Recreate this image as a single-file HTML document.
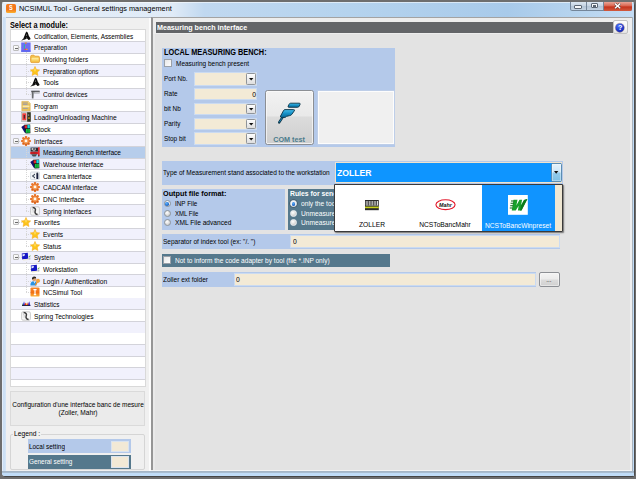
<!DOCTYPE html><html><head><meta charset="utf-8"><title>NCSIMUL Tool - General settings management</title><style>
html,body{margin:0;padding:0;}
body{width:636px;height:479px;position:relative;overflow:hidden;background:#4c4c4c;font-family:"Liberation Sans",sans-serif;}
.b{position:absolute;box-sizing:border-box;}
.t{position:absolute;white-space:nowrap;line-height:10px;height:10px;transform-origin:0 50%;}
svg{position:absolute;overflow:visible;}
</style></head><body>
<div class="b" style="left:0px;top:0px;width:636px;height:479px;background:#6e6e6e;"></div>
<div class="b" style="left:2px;top:2px;width:632px;height:473.5px;background:linear-gradient(90deg,#e4eef9 0%,#e0ebf7 27%,#c0d8f0 32%,#b5d3ee 55%,#a8caea 80%,#b8d5ef 92%,#c4dcf4 100%);border-radius:2px 2px 3px 3px;box-shadow:0.8px 0.9px 0 0 #454545;"></div>
<div class="b" style="left:2px;top:2px;width:632px;height:1px;background:rgba(255,255,255,0.55);border-radius:2px 2px 0 0;"></div>
<div class="b" style="left:2px;top:17px;width:4px;height:455px;background:linear-gradient(90deg,#eef4fb,#c9def4 40%,#d6e6f6);"></div>
<div class="b" style="left:631.5px;top:17px;width:2.5px;height:458.5px;background:linear-gradient(90deg,#a9b3bd 0,#a9b3bd 35%,#c0dcf7 40%,#c0dcf7);"></div>
<div class="b" style="left:2px;top:471px;width:632px;height:4.5px;background:linear-gradient(180deg,#a2b2c2 0,#a9bdd0 30%,#c0dcf7 38%,#c0dcf7 100%);border-radius:0 0 3px 3px;"></div>
<div class="b" style="left:6.2px;top:3.6px;width:9.5px;height:9.4px;background:linear-gradient(180deg,#f57c1e 0%,#f3731a 60%,#fbb22e 100%);border-radius:1.6px;"></div>
<div class="t" style="left:8.9px;top:3.20px;font-size:7.4px;color:#fff;transform:scaleX(0.75);font-weight:bold;">S</div>
<div class="t" style="left:19px;top:4.30px;font-size:7.8px;color:#000;transform:scaleX(0.94);">NCSIMUL Tool - General settings management</div>
<div class="b" style="left:569.7px;top:2px;width:62.3px;height:9.4px;background:linear-gradient(180deg,#dbe6f1 0%,#c6d4e3 45%,#b3c4d6 55%,#c3d3e3 100%);border:0.8px solid #74869a;border-top:none;border-radius:0 0 2.5px 2.5px;"></div>
<div class="b" style="left:586px;top:2px;width:0.8px;height:9.4px;background:#74869a;"></div>
<div class="b" style="left:603px;top:2px;width:0.8px;height:9.4px;background:#74869a;"></div>
<div class="b" style="left:603.6px;top:2px;width:28px;height:8.8px;background:linear-gradient(180deg,#e8a597 0%,#dc6a55 40%,#c5341d 55%,#d25a3f 100%);border-radius:0 0 2px 0;"></div>
<div class="b" style="left:574.2px;top:5.4px;width:7.8px;height:3.4px;background:#f6f8fa;border:0.8px solid #5b6673;border-radius:1px;"></div>
<div class="b" style="left:591.2px;top:2.8px;width:6.8px;height:5.2px;background:#f6f8fa;border:0.8px solid #5b6673;border-radius:1px;"></div>
<div class="b" style="left:593.4px;top:4.6px;width:2.6px;height:1.8px;background:#b9c6d4;border:0.5px solid #5b6673;"></div>
<svg style="left:614.2px;top:2.6px" width="7.2" height="5.8" viewBox="0 0 7.2 5.8"><path d="M1 0.6 L6.2 5.2 M6.2 0.6 L1 5.2" stroke="#4a2a2a" stroke-width="2.4"/><path d="M1 0.6 L6.2 5.2 M6.2 0.6 L1 5.2" stroke="#fff" stroke-width="1.5"/></svg>
<div class="b" style="left:5.7px;top:17px;width:626px;height:454px;background:#f0f0f0;"></div>
<div class="b" style="left:5.7px;top:17px;width:626px;height:1px;background:#b4bcc6;"></div>
<div class="b" style="left:149px;top:18px;width:2px;height:453px;background:#fcfcfc;"></div>
<div class="b" style="left:151px;top:17px;width:480.7px;height:453.2px;background:#e3e3e3;border:1px solid #a3a3a3;border-left:2px solid #959595;border-bottom:none;"></div>
<div class="b" style="left:153px;top:18px;width:1.6px;height:452px;background:#e9e9e9;"></div>
<div class="b" style="left:153px;top:18px;width:477.5px;height:16.4px;background:#ededed;"></div>
<div class="b" style="left:630.4px;top:18px;width:1.2px;height:453px;background:#efefef;"></div>
<div class="b" style="left:153px;top:470px;width:478.5px;height:1px;background:#f4f4f4;"></div>
<div class="t" style="left:10px;top:20.70px;font-size:8.2px;color:#000;transform:scaleX(0.891);font-weight:bold;">Select a module:</div>
<div class="b" style="left:10px;top:29.4px;width:136px;height:358px;background:#fff;border:1px solid #d9d9d9;"></div>
<div class="b" style="left:11px;top:30.4px;width:134px;height:10.75px;background:#fff;"></div>
<div class="b" style="left:11px;top:41.16px;width:134px;height:0.9px;background:#d3d3da;"></div>
<div class="b" style="left:11px;top:42.05px;width:134px;height:10.75px;background:#f1f1fc;"></div>
<div class="b" style="left:11px;top:52.81px;width:134px;height:0.9px;background:#d3d3da;"></div>
<div class="b" style="left:11px;top:53.71px;width:134px;height:10.75px;background:#fff;"></div>
<div class="b" style="left:11px;top:64.46px;width:134px;height:0.9px;background:#d3d3da;"></div>
<div class="b" style="left:11px;top:65.36px;width:134px;height:10.75px;background:#f1f1fc;"></div>
<div class="b" style="left:11px;top:76.12px;width:134px;height:0.9px;background:#d3d3da;"></div>
<div class="b" style="left:11px;top:77.02px;width:134px;height:10.75px;background:#fff;"></div>
<div class="b" style="left:11px;top:87.77px;width:134px;height:0.9px;background:#d3d3da;"></div>
<div class="b" style="left:11px;top:88.67px;width:134px;height:10.75px;background:#f1f1fc;"></div>
<div class="b" style="left:11px;top:99.43px;width:134px;height:0.9px;background:#d3d3da;"></div>
<div class="b" style="left:11px;top:100.33px;width:134px;height:10.75px;background:#fff;"></div>
<div class="b" style="left:11px;top:111.08px;width:134px;height:0.9px;background:#d3d3da;"></div>
<div class="b" style="left:11px;top:111.98px;width:134px;height:10.75px;background:#f1f1fc;"></div>
<div class="b" style="left:11px;top:122.74px;width:134px;height:0.9px;background:#d3d3da;"></div>
<div class="b" style="left:11px;top:123.64px;width:134px;height:10.75px;background:#fff;"></div>
<div class="b" style="left:11px;top:134.39px;width:134px;height:0.9px;background:#d3d3da;"></div>
<div class="b" style="left:11px;top:135.29px;width:134px;height:10.75px;background:#f1f1fc;"></div>
<div class="b" style="left:11px;top:146.05px;width:134px;height:0.9px;background:#d3d3da;"></div>
<div class="b" style="left:11px;top:146.95px;width:134px;height:10.75px;background:#b6cdeb;"></div>
<div class="b" style="left:11px;top:157.7px;width:134px;height:0.9px;background:#d3d3da;"></div>
<div class="b" style="left:11px;top:158.6px;width:134px;height:10.75px;background:#f1f1fc;"></div>
<div class="b" style="left:11px;top:169.36px;width:134px;height:0.9px;background:#d3d3da;"></div>
<div class="b" style="left:11px;top:170.26px;width:134px;height:10.75px;background:#fff;"></div>
<div class="b" style="left:11px;top:181.01px;width:134px;height:0.9px;background:#d3d3da;"></div>
<div class="b" style="left:11px;top:181.91px;width:134px;height:10.75px;background:#f1f1fc;"></div>
<div class="b" style="left:11px;top:192.67px;width:134px;height:0.9px;background:#d3d3da;"></div>
<div class="b" style="left:11px;top:193.57px;width:134px;height:10.75px;background:#fff;"></div>
<div class="b" style="left:11px;top:204.32px;width:134px;height:0.9px;background:#d3d3da;"></div>
<div class="b" style="left:11px;top:205.22px;width:134px;height:10.75px;background:#f1f1fc;"></div>
<div class="b" style="left:11px;top:215.98px;width:134px;height:0.9px;background:#d3d3da;"></div>
<div class="b" style="left:11px;top:216.88px;width:134px;height:10.75px;background:#fff;"></div>
<div class="b" style="left:11px;top:227.63px;width:134px;height:0.9px;background:#d3d3da;"></div>
<div class="b" style="left:11px;top:228.53px;width:134px;height:10.75px;background:#f1f1fc;"></div>
<div class="b" style="left:11px;top:239.29px;width:134px;height:0.9px;background:#d3d3da;"></div>
<div class="b" style="left:11px;top:240.19px;width:134px;height:10.75px;background:#fff;"></div>
<div class="b" style="left:11px;top:250.94px;width:134px;height:0.9px;background:#d3d3da;"></div>
<div class="b" style="left:11px;top:251.84px;width:134px;height:10.75px;background:#f1f1fc;"></div>
<div class="b" style="left:11px;top:262.6px;width:134px;height:0.9px;background:#d3d3da;"></div>
<div class="b" style="left:11px;top:263.5px;width:134px;height:10.75px;background:#fff;"></div>
<div class="b" style="left:11px;top:274.25px;width:134px;height:0.9px;background:#d3d3da;"></div>
<div class="b" style="left:11px;top:275.15px;width:134px;height:10.75px;background:#f1f1fc;"></div>
<div class="b" style="left:11px;top:285.91px;width:134px;height:0.9px;background:#d3d3da;"></div>
<div class="b" style="left:11px;top:286.81px;width:134px;height:10.75px;background:#fff;"></div>
<div class="b" style="left:11px;top:297.56px;width:134px;height:0.9px;background:#d3d3da;"></div>
<div class="b" style="left:11px;top:298.46px;width:134px;height:10.75px;background:#f1f1fc;"></div>
<div class="b" style="left:11px;top:309.22px;width:134px;height:0.9px;background:#d3d3da;"></div>
<div class="b" style="left:11px;top:310.12px;width:134px;height:10.75px;background:#fff;"></div>
<div class="b" style="left:11px;top:320.87px;width:134px;height:0.9px;background:#d3d3da;"></div>
<div class="b" style="left:11px;top:321.77px;width:134px;height:10.75px;background:#f1f1fc;"></div>
<div class="b" style="left:11px;top:332.53px;width:134px;height:0.9px;background:#d3d3da;"></div>
<div class="b" style="left:11px;top:333.43px;width:134px;height:10.75px;background:#fff;"></div>
<div class="b" style="left:11px;top:344.18px;width:134px;height:0.9px;background:#d3d3da;"></div>
<div class="b" style="left:11px;top:345.08px;width:134px;height:10.75px;background:#f1f1fc;"></div>
<div class="b" style="left:11px;top:355.84px;width:134px;height:0.9px;background:#d3d3da;"></div>
<div class="b" style="left:11px;top:356.74px;width:134px;height:10.75px;background:#fff;"></div>
<div class="b" style="left:11px;top:367.49px;width:134px;height:0.9px;background:#d3d3da;"></div>
<div class="b" style="left:11px;top:368.39px;width:134px;height:10.75px;background:#f1f1fc;"></div>
<div class="b" style="left:11px;top:379.15px;width:134px;height:0.9px;background:#d3d3da;"></div>
<div class="b" style="left:11px;top:380.05px;width:134px;height:6.35px;background:#fff;"></div>
<div class="b" style="left:25.6px;top:51.98px;width:0.6px;height:42.12px;border-left:0.6px dotted #d6d6d6;"></div>
<div class="b" style="left:25.6px;top:59.14px;width:5.399999999999999px;height:0.6px;border-top:0.6px dotted #d6d6d6;"></div>
<div class="b" style="left:25.6px;top:70.79px;width:5.399999999999999px;height:0.6px;border-top:0.6px dotted #d6d6d6;"></div>
<div class="b" style="left:25.6px;top:82.45px;width:5.399999999999999px;height:0.6px;border-top:0.6px dotted #d6d6d6;"></div>
<div class="b" style="left:25.6px;top:94.1px;width:5.399999999999999px;height:0.6px;border-top:0.6px dotted #d6d6d6;"></div>
<div class="b" style="left:18.5px;top:47.48px;width:3.0px;height:0.6px;border-top:0.6px dotted #d6d6d6;"></div>
<div class="b" style="left:25.6px;top:145.22px;width:0.6px;height:65.43px;border-left:0.6px dotted #d6d6d6;"></div>
<div class="b" style="left:25.6px;top:152.38px;width:5.399999999999999px;height:0.6px;border-top:0.6px dotted #d6d6d6;"></div>
<div class="b" style="left:25.6px;top:164.03px;width:5.399999999999999px;height:0.6px;border-top:0.6px dotted #d6d6d6;"></div>
<div class="b" style="left:25.6px;top:175.69px;width:5.399999999999999px;height:0.6px;border-top:0.6px dotted #d6d6d6;"></div>
<div class="b" style="left:25.6px;top:187.34px;width:5.399999999999999px;height:0.6px;border-top:0.6px dotted #d6d6d6;"></div>
<div class="b" style="left:25.6px;top:199.0px;width:5.399999999999999px;height:0.6px;border-top:0.6px dotted #d6d6d6;"></div>
<div class="b" style="left:25.6px;top:210.65px;width:5.399999999999999px;height:0.6px;border-top:0.6px dotted #d6d6d6;"></div>
<div class="b" style="left:18.5px;top:140.72px;width:3.0px;height:0.6px;border-top:0.6px dotted #d6d6d6;"></div>
<div class="b" style="left:25.6px;top:226.81px;width:0.6px;height:18.81px;border-left:0.6px dotted #d6d6d6;"></div>
<div class="b" style="left:25.6px;top:233.96px;width:5.399999999999999px;height:0.6px;border-top:0.6px dotted #d6d6d6;"></div>
<div class="b" style="left:25.6px;top:245.62px;width:5.399999999999999px;height:0.6px;border-top:0.6px dotted #d6d6d6;"></div>
<div class="b" style="left:18.5px;top:222.31px;width:3.0px;height:0.6px;border-top:0.6px dotted #d6d6d6;"></div>
<div class="b" style="left:25.6px;top:261.77px;width:0.6px;height:30.46px;border-left:0.6px dotted #d6d6d6;"></div>
<div class="b" style="left:25.6px;top:268.93px;width:5.399999999999999px;height:0.6px;border-top:0.6px dotted #d6d6d6;"></div>
<div class="b" style="left:25.6px;top:280.58px;width:5.399999999999999px;height:0.6px;border-top:0.6px dotted #d6d6d6;"></div>
<div class="b" style="left:25.6px;top:292.24px;width:5.399999999999999px;height:0.6px;border-top:0.6px dotted #d6d6d6;"></div>
<div class="b" style="left:18.5px;top:257.27px;width:3.0px;height:0.6px;border-top:0.6px dotted #d6d6d6;"></div>
<svg style="left:20.80px;top:30.83px" width="10" height="10" viewBox="0 0 10 10"><path d="M5.7 0.5 L6.8 1.8 L7.8 4.8 L9.5 7.4 L9.2 8.6 L7.4 8.9 L6.4 7.8 L5.4 7.6 L4.2 8.6 L1.8 9 L0.5 9.9 L0.9 8.9 L2.4 7.4 L3.6 4.4 L4.6 1.7 Z" fill="#0c0c0c"/><path d="M5.3 2.8 L6 4.6 L5 5 Z" fill="#8f8f8f"/><path d="M5.2 6.6 L6 6.6" stroke="#777" stroke-width="0.6"/></svg>
<div class="t" style="left:33.6px;top:31.83px;font-size:8px;color:#000;transform:scaleX(0.797);">Codification, Elements, Assemblies</div>
<div class="b" style="left:13px;top:45px;width:6px;height:6px;background:linear-gradient(135deg,#fff,#ececec);border:1px solid #bdbdbd;border-radius:1px;"></div>
<div class="b" style="left:14.5px;top:47.5px;width:3px;height:1px;background:#6a6a6a;"></div>
<svg style="left:20.80px;top:42.48px" width="10" height="10" viewBox="0 0 10 10"><rect x="0.2" y="0.5" width="9.4" height="9.2" fill="#6e70f3"/><rect x="0.2" y="8.6" width="9.4" height="1.1" fill="#4d56ea"/><path d="M3.4 0.5 L6.2 0.5 L4.8 2.2Z" fill="#f0882a"/><path d="M3.6 2.6 L3.6 7.2" stroke="#1fc2a0" stroke-width="1.1"/><path d="M3.1 7.3 L5.2 7.3" stroke="#e4407a" stroke-width="1.2"/><path d="M5 7.3 L6.6 7.3" stroke="#f09a2a" stroke-width="1.2"/><path d="M4.6 3.6 L4.6 6" stroke="#b05ae6" stroke-width="0.8"/></svg>
<div class="t" style="left:33.6px;top:43.48px;font-size:8px;color:#000;transform:scaleX(0.8);">Preparation</div>
<svg style="left:30.40px;top:54.14px" width="10" height="10" viewBox="0 0 10 10"><defs><linearGradient id="fg" x1="0" y1="0" x2="0" y2="1"><stop offset="0" stop-color="#fff0a8"/><stop offset="1" stop-color="#f6c142"/></linearGradient></defs><path d="M0.6 2.6 Q0.6 1.2 2 1.2 L4 1.2 L5 2.2 L8.2 2.2 Q9.5 2.2 9.5 3.4 L9.5 7.4 Q9.5 8.6 8.2 8.6 L1.9 8.6 Q0.6 8.6 0.6 7.4 Z" fill="#f3c148" stroke="#e39a2c" stroke-width="0.8"/><rect x="1.6" y="3.8" width="7" height="3.8" rx="0.6" fill="url(#fg)"/></svg>
<div class="t" style="left:43.4px;top:55.14px;font-size:8px;color:#000;transform:scaleX(0.815);">Working folders</div>
<svg style="left:30.40px;top:65.79px" width="10" height="10" viewBox="0 0 10 10"><path d="M5 0.4 L6.4 3.5 L9.7 3.9 L7.3 6.2 L7.9 9.5 L5 7.9 L2.1 9.5 L2.7 6.2 L0.3 3.9 L3.6 3.5 Z" fill="#fcc41c" stroke="#f4a51a" stroke-width="0.5"/><path d="M5 1.6 L5.9 3.9 L5 6 L4.1 3.9Z" fill="#ffe066"/></svg>
<div class="t" style="left:43.4px;top:66.79px;font-size:8px;color:#000;transform:scaleX(0.8);">Preparation options</div>
<svg style="left:30.40px;top:77.45px" width="10" height="10" viewBox="0 0 10 10"><path d="M5.7 0.5 L6.8 1.8 L7.8 4.8 L9.5 7.4 L9.2 8.6 L7.4 8.9 L6.4 7.8 L5.4 7.6 L4.2 8.6 L1.8 9 L0.5 9.9 L0.9 8.9 L2.4 7.4 L3.6 4.4 L4.6 1.7 Z" fill="#0c0c0c"/><path d="M5.3 2.8 L6 4.6 L5 5 Z" fill="#8f8f8f"/><path d="M5.2 6.6 L6 6.6" stroke="#777" stroke-width="0.6"/></svg>
<div class="t" style="left:43.4px;top:78.45px;font-size:8px;color:#000;transform:scaleX(0.84);">Tools</div>
<svg style="left:30.40px;top:89.10px" width="10" height="10" viewBox="0 0 10 10"><path d="M0.8 1.8 L9.6 1.8 L9.6 4.4 L4 4.4 L3.6 9.4 L1.8 9.4 L1.6 4.4 L0.8 1 Z" fill="#9a9da1"/><rect x="1.4" y="1.8" width="8.2" height="1.1" fill="#4d4f52"/><path d="M2.6 3 L2.6 9.2" stroke="#5d5f63" stroke-width="0.9"/><path d="M4.6 3.4 L9.4 3.4" stroke="#cfd1d4" stroke-width="0.8"/></svg>
<div class="t" style="left:43.4px;top:90.10px;font-size:8px;color:#000;transform:scaleX(0.809);">Control devices</div>
<svg style="left:20.80px;top:100.76px" width="10" height="10" viewBox="0 0 10 10"><path d="M0.8 0.4 L7.4 0.4 L9.2 2.2 L9.2 9.8 L0.8 9.8 Z" fill="#e9c25a" stroke="#d2a13a" stroke-width="0.5"/><path d="M1.8 2 L6.6 2 M1.8 3.4 L6.6 3.4" stroke="#8f95b8" stroke-width="0.8"/><rect x="1.6" y="4.6" width="6.8" height="1.6" fill="#f7e7ae"/><path d="M1.8 7.4 L6.8 7.4" stroke="#8f95b8" stroke-width="0.8"/><path d="M7.4 0.4 L7.4 2.2 L9.2 2.2Z" fill="#f8e6a6"/></svg>
<div class="t" style="left:33.6px;top:101.76px;font-size:8px;color:#000;transform:scaleX(0.776);">Program</div>
<svg style="left:20.80px;top:112.41px" width="10" height="10" viewBox="0 0 10 10"><rect x="0.4" y="0.4" width="6" height="9.2" fill="#d9dedd" stroke="#9aa3a0" stroke-width="0.5"/><rect x="1.3" y="1.3" width="4" height="7" fill="#f0403c"/><rect x="2.7" y="3" width="1.2" height="3.6" fill="#3a2a2a"/><rect x="6.2" y="0.2" width="3.6" height="9.6" fill="#33331e"/><rect x="6.8" y="2.4" width="1.4" height="1.4" fill="#8b8f94"/><rect x="7" y="5.4" width="2" height="1.4" fill="#b8891e"/></svg>
<div class="t" style="left:33.6px;top:113.41px;font-size:8px;color:#000;transform:scaleX(0.833);">Loading/Unloading Machine</div>
<svg style="left:20.80px;top:124.07px" width="10" height="10" viewBox="0 0 10 10"><path d="M0.3 3 L3.6 0.8 L5 9 L3.6 8.4 Z" fill="#0f106e"/><path d="M3.2 0.7 L9.2 0.4 L9.4 9.2 L4.6 9.4 Z" fill="#111"/><rect x="3.7" y="1.3" width="2.4" height="3" fill="#e3262a"/><rect x="6.4" y="0.9" width="2.4" height="3.4" fill="#18d6e6"/><rect x="4.9" y="5" width="4" height="3.8" fill="#12c244"/><path d="M6.9 5 L6.9 8.8" stroke="#0a5a20" stroke-width="0.5"/></svg>
<div class="t" style="left:33.6px;top:125.07px;font-size:8px;color:#000;transform:scaleX(0.834);">Stock</div>
<div class="b" style="left:13px;top:138px;width:6px;height:6px;background:linear-gradient(135deg,#fff,#ececec);border:1px solid #bdbdbd;border-radius:1px;"></div>
<div class="b" style="left:14.5px;top:140.5px;width:3px;height:1px;background:#6a6a6a;"></div>
<svg style="left:20.80px;top:135.72px" width="10" height="10" viewBox="0 0 10 10"><g fill="#e9762b"><rect x="-1.05" y="-4.9" width="2.1" height="2.4" rx="0.4" transform="translate(5 5) rotate(0)"/><rect x="-1.05" y="-4.9" width="2.1" height="2.4" rx="0.4" transform="translate(5 5) rotate(45)"/><rect x="-1.05" y="-4.9" width="2.1" height="2.4" rx="0.4" transform="translate(5 5) rotate(90)"/><rect x="-1.05" y="-4.9" width="2.1" height="2.4" rx="0.4" transform="translate(5 5) rotate(135)"/><rect x="-1.05" y="-4.9" width="2.1" height="2.4" rx="0.4" transform="translate(5 5) rotate(180)"/><rect x="-1.05" y="-4.9" width="2.1" height="2.4" rx="0.4" transform="translate(5 5) rotate(225)"/><rect x="-1.05" y="-4.9" width="2.1" height="2.4" rx="0.4" transform="translate(5 5) rotate(270)"/><rect x="-1.05" y="-4.9" width="2.1" height="2.4" rx="0.4" transform="translate(5 5) rotate(315)"/><circle cx="5" cy="5" r="3.5"/></g><circle cx="5" cy="5" r="2.6" fill="#f39a52"/><circle cx="5" cy="4.9" r="1.35" fill="#fff7ee"/><path d="M1.8 6.6 A3.6 3.6 0 0 0 8.2 6.6" fill="none" stroke="#c9581a" stroke-width="0.7"/></svg>
<div class="t" style="left:33.6px;top:136.72px;font-size:8px;color:#000;transform:scaleX(0.811);">Interfaces</div>
<svg style="left:30.40px;top:147.38px" width="10" height="10" viewBox="0 0 10 10"><path d="M0.6 0.6 L8 0.6 L8 4.6 L0.6 4.6 Z" fill="#2b2d30"/><rect x="1.6" y="1.2" width="1.8" height="1.6" fill="#e8eaec"/><rect x="4.4" y="1.4" width="1.6" height="1.4" fill="#b9bcc0"/><path d="M2.4 3 L5.6 3 L4.6 4.4 L3.2 4.4Z" fill="#8e9195"/><rect x="0.2" y="4.8" width="8" height="2.4" fill="#d4242a"/><path d="M1.4 6 L6.8 6" stroke="#7a1014" stroke-width="0.7" stroke-dasharray="0.9 0.5"/><path d="M1.2 7.2 L7.2 7.2 L5.6 9.4 L2.8 9.4 Z" fill="#4a4d51"/><rect x="8" y="0.2" width="1.7" height="8.6" fill="#e8262c"/><rect x="8.3" y="8.2" width="1" height="1.4" fill="#222"/></svg>
<div class="t" style="left:43.4px;top:148.38px;font-size:8px;color:#000;transform:scaleX(0.819);">Measuring Bench interface</div>
<svg style="left:30.40px;top:159.03px" width="10" height="10" viewBox="0 0 10 10"><path d="M0.3 3 L3.6 0.8 L5 9 L3.6 8.4 Z" fill="#0f106e"/><path d="M3.2 0.7 L9.2 0.4 L9.4 9.2 L4.6 9.4 Z" fill="#111"/><rect x="3.7" y="1.3" width="2.4" height="3" fill="#e3262a"/><rect x="6.4" y="0.9" width="2.4" height="3.4" fill="#18d6e6"/><rect x="4.9" y="5" width="4" height="3.8" fill="#12c244"/><path d="M6.9 5 L6.9 8.8" stroke="#0a5a20" stroke-width="0.5"/></svg>
<div class="t" style="left:43.4px;top:160.03px;font-size:8px;color:#000;transform:scaleX(0.823);">Warehouse interface</div>
<svg style="left:30.40px;top:170.69px" width="10" height="10" viewBox="0 0 10 10"><rect x="0.5" y="1" width="9" height="7.6" rx="1" fill="#f1f4f7" stroke="#c3ccd6" stroke-width="0.6"/><path d="M1.8 5 L5 2.6 L5 7.4 Z" fill="#2f3a4a"/><path d="M3.2 5 L5 3.8 L5 6.2Z" fill="#dfe6ee"/><rect x="6.4" y="2.6" width="1.9" height="5.4" fill="#141c3a"/><circle cx="7.3" cy="2.4" r="0.9" fill="#2a3242"/></svg>
<div class="t" style="left:43.4px;top:171.69px;font-size:8px;color:#000;transform:scaleX(0.797);">Camera interface</div>
<svg style="left:30.40px;top:182.34px" width="10" height="10" viewBox="0 0 10 10"><g fill="#e9762b"><rect x="-1.05" y="-4.9" width="2.1" height="2.4" rx="0.4" transform="translate(5 5) rotate(0)"/><rect x="-1.05" y="-4.9" width="2.1" height="2.4" rx="0.4" transform="translate(5 5) rotate(45)"/><rect x="-1.05" y="-4.9" width="2.1" height="2.4" rx="0.4" transform="translate(5 5) rotate(90)"/><rect x="-1.05" y="-4.9" width="2.1" height="2.4" rx="0.4" transform="translate(5 5) rotate(135)"/><rect x="-1.05" y="-4.9" width="2.1" height="2.4" rx="0.4" transform="translate(5 5) rotate(180)"/><rect x="-1.05" y="-4.9" width="2.1" height="2.4" rx="0.4" transform="translate(5 5) rotate(225)"/><rect x="-1.05" y="-4.9" width="2.1" height="2.4" rx="0.4" transform="translate(5 5) rotate(270)"/><rect x="-1.05" y="-4.9" width="2.1" height="2.4" rx="0.4" transform="translate(5 5) rotate(315)"/><circle cx="5" cy="5" r="3.5"/></g><circle cx="5" cy="5" r="2.6" fill="#f39a52"/><circle cx="5" cy="4.9" r="1.35" fill="#fff7ee"/><path d="M1.8 6.6 A3.6 3.6 0 0 0 8.2 6.6" fill="none" stroke="#c9581a" stroke-width="0.7"/></svg>
<div class="t" style="left:43.4px;top:183.34px;font-size:8px;color:#000;transform:scaleX(0.802);">CADCAM interface</div>
<svg style="left:30.40px;top:194.00px" width="10" height="10" viewBox="0 0 10 10"><g fill="#e9762b"><rect x="-1.05" y="-4.9" width="2.1" height="2.4" rx="0.4" transform="translate(5 5) rotate(0)"/><rect x="-1.05" y="-4.9" width="2.1" height="2.4" rx="0.4" transform="translate(5 5) rotate(45)"/><rect x="-1.05" y="-4.9" width="2.1" height="2.4" rx="0.4" transform="translate(5 5) rotate(90)"/><rect x="-1.05" y="-4.9" width="2.1" height="2.4" rx="0.4" transform="translate(5 5) rotate(135)"/><rect x="-1.05" y="-4.9" width="2.1" height="2.4" rx="0.4" transform="translate(5 5) rotate(180)"/><rect x="-1.05" y="-4.9" width="2.1" height="2.4" rx="0.4" transform="translate(5 5) rotate(225)"/><rect x="-1.05" y="-4.9" width="2.1" height="2.4" rx="0.4" transform="translate(5 5) rotate(270)"/><rect x="-1.05" y="-4.9" width="2.1" height="2.4" rx="0.4" transform="translate(5 5) rotate(315)"/><circle cx="5" cy="5" r="3.5"/></g><circle cx="5" cy="5" r="2.6" fill="#f39a52"/><circle cx="5" cy="4.9" r="1.35" fill="#fff7ee"/><path d="M1.8 6.6 A3.6 3.6 0 0 0 8.2 6.6" fill="none" stroke="#c9581a" stroke-width="0.7"/></svg>
<div class="t" style="left:43.4px;top:195.00px;font-size:8px;color:#000;transform:scaleX(0.817);">DNC Interface</div>
<svg style="left:30.40px;top:205.65px" width="10" height="10" viewBox="0 0 10 10"><rect x="0.6" y="0.8" width="8.8" height="8.4" rx="1.4" fill="#f7f7f7" stroke="#b9b9b9" stroke-width="0.7"/><path d="M2.6 1.6 C5.6 2 5.8 3.6 5.2 5 C4.6 6.4 5.2 8 7.6 8.6" fill="none" stroke="#3c3c3c" stroke-width="1.5"/><path d="M1.8 2.6 C3.2 3 3.4 5 3 6.6" fill="none" stroke="#bdbdbd" stroke-width="0.8"/></svg>
<div class="t" style="left:43.4px;top:206.65px;font-size:8px;color:#000;transform:scaleX(0.806);">Spring interfaces</div>
<div class="b" style="left:13px;top:219px;width:6px;height:6px;background:linear-gradient(135deg,#fff,#ececec);border:1px solid #bdbdbd;border-radius:1px;"></div>
<div class="b" style="left:14.5px;top:221.5px;width:3px;height:1px;background:#6a6a6a;"></div>
<svg style="left:20.80px;top:217.31px" width="10" height="10" viewBox="0 0 10 10"><path d="M5 0.4 L6.4 3.5 L9.7 3.9 L7.3 6.2 L7.9 9.5 L5 7.9 L2.1 9.5 L2.7 6.2 L0.3 3.9 L3.6 3.5 Z" fill="#fcc41c" stroke="#f4a51a" stroke-width="0.5"/><path d="M5 1.6 L5.9 3.9 L5 6 L4.1 3.9Z" fill="#ffe066"/></svg>
<div class="t" style="left:33.6px;top:218.31px;font-size:8px;color:#000;transform:scaleX(0.79);">Favorites</div>
<svg style="left:30.40px;top:228.96px" width="10" height="10" viewBox="0 0 10 10"><path d="M5 0.4 L6.4 3.5 L9.7 3.9 L7.3 6.2 L7.9 9.5 L5 7.9 L2.1 9.5 L2.7 6.2 L0.3 3.9 L3.6 3.5 Z" fill="#fcc41c" stroke="#f4a51a" stroke-width="0.5"/><path d="M5 1.6 L5.9 3.9 L5 6 L4.1 3.9Z" fill="#ffe066"/></svg>
<div class="t" style="left:43.4px;top:229.96px;font-size:8px;color:#000;transform:scaleX(0.817);">Events</div>
<svg style="left:30.40px;top:240.62px" width="10" height="10" viewBox="0 0 10 10"><path d="M5 0.4 L6.4 3.5 L9.7 3.9 L7.3 6.2 L7.9 9.5 L5 7.9 L2.1 9.5 L2.7 6.2 L0.3 3.9 L3.6 3.5 Z" fill="#fcc41c" stroke="#f4a51a" stroke-width="0.5"/><path d="M5 1.6 L5.9 3.9 L5 6 L4.1 3.9Z" fill="#ffe066"/></svg>
<div class="t" style="left:43.4px;top:241.62px;font-size:8px;color:#000;transform:scaleX(0.802);">Status</div>
<div class="b" style="left:13px;top:254px;width:6px;height:6px;background:linear-gradient(135deg,#fff,#ececec);border:1px solid #bdbdbd;border-radius:1px;"></div>
<div class="b" style="left:14.5px;top:256.5px;width:3px;height:1px;background:#6a6a6a;"></div>
<svg style="left:20.80px;top:252.27px" width="10" height="10" viewBox="0 0 10 10"><path d="M0.8 1.6 L6.8 0.8 L7.2 6.8 L1.2 7.4 Z" fill="#1416c4"/><path d="M1.4 2.2 L4 1.9 L3.6 3.8 L1.5 4.4 Z" fill="#e4e8ff"/><path d="M1.2 7.4 L7.2 6.8 L7 8 L2.4 8.6 Z" fill="#efe9cf"/><path d="M7.6 4.6 L9.4 3.2 L9.6 4 L8 5.4Z" fill="#5aa84a"/><path d="M7.4 5.6 L9.4 5.4 L9.4 7.6 L7.6 7.8Z" fill="#b9bcc2"/></svg>
<div class="t" style="left:33.6px;top:253.27px;font-size:8px;color:#000;transform:scaleX(0.769);">System</div>
<svg style="left:30.40px;top:263.93px" width="10" height="10" viewBox="0 0 10 10"><path d="M0.8 1.6 L6.8 0.8 L7.2 6.8 L1.2 7.4 Z" fill="#1416c4"/><path d="M1.4 2.2 L4 1.9 L3.6 3.8 L1.5 4.4 Z" fill="#e4e8ff"/><path d="M1.2 7.4 L7.2 6.8 L7 8 L2.4 8.6 Z" fill="#efe9cf"/><path d="M7.6 4.6 L9.4 3.2 L9.6 4 L8 5.4Z" fill="#5aa84a"/><path d="M7.4 5.6 L9.4 5.4 L9.4 7.6 L7.6 7.8Z" fill="#b9bcc2"/></svg>
<div class="t" style="left:43.4px;top:264.93px;font-size:8px;color:#000;transform:scaleX(0.822);">Workstation</div>
<svg style="left:30.40px;top:275.58px" width="10" height="10" viewBox="0 0 10 10"><path d="M0.4 9.4 Q0.2 5.4 3.4 5.2 L5.4 5.2 Q6.6 6 6.4 9.4 Z" fill="#2a93e4"/><path d="M3.6 5.2 L4.6 7.6 L5.4 5.2Z" fill="#f4f4f4"/><circle cx="4.2" cy="3.2" r="2" fill="#dca27a"/><path d="M2 3 Q1.8 0.4 4.4 0.4 Q6.6 0.6 6.2 2.4 Q4.4 1.6 2.8 3.6 Z" fill="#2c2620"/><circle cx="8" cy="4.8" r="1.7" fill="#f7a83a" stroke="#e8891a" stroke-width="0.5"/><path d="M7.2 6 L5.4 9.2" stroke="#ef8f1e" stroke-width="1.3"/></svg>
<div class="t" style="left:43.4px;top:276.58px;font-size:8px;color:#000;transform:scaleX(0.84);">Login / Authentication</div>
<svg style="left:30.40px;top:287.24px" width="10" height="10" viewBox="0 0 10 10"><defs><linearGradient id="ng" x1="0" y1="0" x2="0" y2="1"><stop offset="0" stop-color="#f9882a"/><stop offset="0.55" stop-color="#f26f14"/><stop offset="1" stop-color="#fdb23a"/></linearGradient></defs><rect x="0.5" y="0.4" width="9" height="9.2" rx="1.2" fill="url(#ng)"/><path d="M3.4 2.6 L6.6 2.6 M5 2.6 L5 7.6 M3.8 7.6 L6.2 7.6" stroke="#fff" stroke-width="1.2" fill="none"/></svg>
<div class="t" style="left:43.4px;top:288.24px;font-size:8px;color:#000;transform:scaleX(0.809);">NCSimul Tool</div>
<svg style="left:20.80px;top:298.89px" width="10" height="10" viewBox="0 0 10 10"><path d="M1 6.6 L2 4 L3 6.6Z" fill="#1a7a2a"/><path d="M1.8 6.6 L3 2.2 L4.2 6.6Z" fill="#2a2ad0"/><path d="M3.2 6.6 L4.4 3.4 L5.6 6.6Z" fill="#e02424"/><path d="M4.6 6.6 L5.8 3.8 L7 6.6Z" fill="#f6b21a"/><path d="M5.8 6.6 L7 3 L8.2 6.6Z" fill="#e02424"/><path d="M7 6.6 L8.2 2.2 L9.4 6.6Z" fill="#2a2ad0"/><rect x="1" y="6" width="8.4" height="0.9" fill="#1a1a3a"/></svg>
<div class="t" style="left:33.6px;top:299.89px;font-size:8px;color:#000;transform:scaleX(0.796);">Statistics</div>
<svg style="left:20.80px;top:310.55px" width="10" height="10" viewBox="0 0 10 10"><rect x="0.6" y="0.8" width="8.8" height="8.4" rx="1.4" fill="#f7f7f7" stroke="#b9b9b9" stroke-width="0.7"/><path d="M2.6 1.6 C5.6 2 5.8 3.6 5.2 5 C4.6 6.4 5.2 8 7.6 8.6" fill="none" stroke="#3c3c3c" stroke-width="1.5"/><path d="M1.8 2.6 C3.2 3 3.4 5 3 6.6" fill="none" stroke="#bdbdbd" stroke-width="0.8"/></svg>
<div class="t" style="left:33.6px;top:311.55px;font-size:8px;color:#000;transform:scaleX(0.827);">Spring Technologies</div>
<div class="b" style="left:10px;top:391px;width:135.4px;height:34.5px;background:#ebebeb;border:1px solid #dadada;"></div>
<div class="t" style="left:-121.60px;top:399.60px;font-size:8px;color:#000;transform:scaleX(0.814);width:400px;text-align:center;transform-origin:50% 50%;">Configuration d'une interface banc de mesure</div>
<div class="t" style="left:-121.60px;top:408.20px;font-size:8px;color:#000;transform:scaleX(0.82);width:400px;text-align:center;transform-origin:50% 50%;">(Zoller, Mahr)</div>
<div class="b" style="left:10px;top:434px;width:135px;height:35.6px;border:1px solid #d5d5d5;border-radius:2px;"></div>
<div class="b" style="left:13px;top:429px;width:28px;height:9px;background:#f0f0f0;"></div>
<div class="t" style="left:14px;top:429.20px;font-size:8px;color:#000;transform:scaleX(0.84);">Legend :</div>
<div class="b" style="left:27.7px;top:439px;width:103.3px;height:14px;background:#b4c9ea;"></div>
<div class="t" style="left:29px;top:441.60px;font-size:8px;color:#000;transform:scaleX(0.8);">Local setting</div>
<div class="b" style="left:110.6px;top:440.8px;width:18.4px;height:11.2px;background:#f2e9d6;border:0.8px solid #d9e3f0;"></div>
<div class="b" style="left:27.7px;top:454.6px;width:103.3px;height:14.2px;background:#55788c;"></div>
<div class="t" style="left:29px;top:457.00px;font-size:8px;color:#fff;transform:scaleX(0.8);">General setting</div>
<div class="b" style="left:110.6px;top:456px;width:18.4px;height:11.6px;background:#f2e9d6;border:0.8px solid #d9e3f0;"></div>
<div class="b" style="left:156px;top:22.2px;width:457px;height:10.6px;background:#636568;"></div>
<div class="t" style="left:157.4px;top:22.70px;font-size:7.8px;color:#fff;transform:scaleX(0.914);font-weight:bold;">Measuring bench interface</div>
<div class="b" style="left:613px;top:20.4px;width:14.8px;height:14px;background:linear-gradient(180deg,#fcfcfc 0%,#f6f6f6 60%,#e2e2e2 100%);border:0.8px solid #c2c2c2;border-radius:2px;"></div>
<svg style="left:615px;top:22.7px" width="9.6" height="9.6" viewBox="0 0 9 9"><defs><radialGradient id="hg" cx="0.4" cy="0.3" r="0.8"><stop offset="0" stop-color="#4a72ff"/><stop offset="1" stop-color="#0416a8"/></radialGradient></defs><circle cx="4.5" cy="4.5" r="4.3" fill="url(#hg)" stroke="#c9a27a" stroke-width="0.4"/></svg>
<div class="t" style="left:617.9px;top:22.70px;font-size:7.6px;color:#fff;transform:scaleX(0.95);font-weight:bold;">?</div>
<div class="b" style="left:162.2px;top:48px;width:233.2px;height:99px;background:#b4c9ea;"></div>
<div class="t" style="left:163.6px;top:47.10px;font-size:8.4px;color:#000;transform:scaleX(0.876);font-weight:bold;">LOCAL MEASURING BENCH:</div>
<div class="b" style="left:164.3px;top:59.3px;width:7.8px;height:7.8px;background:linear-gradient(135deg,#e8e8e8,#fdfdfd);border:0.7px solid #9aa0a8;"></div>
<div class="t" style="left:175.8px;top:58.90px;font-size:8px;color:#000;transform:scaleX(0.809);">Measuring bench present</div>
<div class="t" style="left:163.5px;top:74.20px;font-size:8px;color:#000;transform:scaleX(0.8);">Port Nb.</div>
<div class="b" style="left:194px;top:72px;width:63.4px;height:14px;background:#f3ead6;border:1px solid #cbdbf1;"></div>
<div class="b" style="left:245.79999999999998px;top:73px;width:10.6px;height:12px;background:linear-gradient(180deg,#fdfdfd,#dedede);border:0.8px solid #8f949a;border-radius:1.3px;"></div>
<svg style="left:249.20px;top:78.40px" width="4.4" height="2.6" viewBox="0 0 4.4 2.6"><path d="M0 0 L4.4 0 L2.2 2.6Z" fill="#111"/></svg>
<div class="t" style="left:163.5px;top:89.40px;font-size:8px;color:#000;transform:scaleX(0.8);">Rate</div>
<div class="b" style="left:194px;top:88px;width:63.4px;height:12.4px;background:#f3ead6;border:1px solid #cbdbf1;"></div>
<div class="t" style="left:163.5px;top:104.20px;font-size:8px;color:#000;transform:scaleX(0.8);">bit Nb</div>
<div class="b" style="left:194px;top:103px;width:63.4px;height:12px;background:#f3ead6;border:1px solid #cbdbf1;"></div>
<div class="b" style="left:245.79999999999998px;top:104px;width:10.6px;height:10px;background:linear-gradient(180deg,#fdfdfd,#dedede);border:0.8px solid #8f949a;border-radius:1.3px;"></div>
<svg style="left:249.20px;top:108.40px" width="4.4" height="2.6" viewBox="0 0 4.4 2.6"><path d="M0 0 L4.4 0 L2.2 2.6Z" fill="#111"/></svg>
<div class="t" style="left:163.5px;top:118.80px;font-size:8px;color:#000;transform:scaleX(0.8);">Parity</div>
<div class="b" style="left:194px;top:117.6px;width:63.4px;height:12px;background:#f3ead6;border:1px solid #cbdbf1;"></div>
<div class="b" style="left:245.79999999999998px;top:118.6px;width:10.6px;height:10px;background:linear-gradient(180deg,#fdfdfd,#dedede);border:0.8px solid #8f949a;border-radius:1.3px;"></div>
<svg style="left:249.20px;top:123.00px" width="4.4" height="2.6" viewBox="0 0 4.4 2.6"><path d="M0 0 L4.4 0 L2.2 2.6Z" fill="#111"/></svg>
<div class="t" style="left:163.5px;top:133.70px;font-size:8px;color:#000;transform:scaleX(0.8);">Stop bit</div>
<div class="b" style="left:194px;top:132.4px;width:63.4px;height:12.2px;background:#f3ead6;border:1px solid #cbdbf1;"></div>
<div class="b" style="left:245.79999999999998px;top:133.4px;width:10.6px;height:10.2px;background:linear-gradient(180deg,#fdfdfd,#dedede);border:0.8px solid #8f949a;border-radius:1.3px;"></div>
<svg style="left:249.20px;top:137.90px" width="4.4" height="2.6" viewBox="0 0 4.4 2.6"><path d="M0 0 L4.4 0 L2.2 2.6Z" fill="#111"/></svg>
<div class="t" style="left:55.80px;top:89.60px;font-size:8px;color:#000;transform:scaleX(0.85);width:200px;text-align:right;transform-origin:100% 50%;">0</div>
<div class="b" style="left:265.4px;top:90px;width:48.2px;height:55.2px;background:linear-gradient(180deg,#f2f2f2 0%,#e9e9e9 47%,#dcdcdc 49%,#cecece 100%);border:0.8px solid #8c8f94;border-radius:2.5px;box-shadow:inset 0 0 0 0.7px #fbfbfb;"></div>
<svg style="left:276px;top:100px" width="28" height="26" viewBox="276 100 28 26"><defs><linearGradient id="cg" x1="0" y1="0" x2="0" y2="1"><stop offset="0" stop-color="#45bdea"/><stop offset="0.5" stop-color="#1590c6"/><stop offset="1" stop-color="#0a6898"/></linearGradient></defs><path d="M290.6 103.2 L299.2 103.2 Q300.6 103.2 300 104.6 L299.2 106.2 Q298.8 107.3 297.6 107.3 L288.8 107.3 Q287.6 107.3 288.2 106 L289 104.4 Q289.6 103.2 290.6 103.2Z" fill="url(#cg)" stroke="#0b3346" stroke-width="0.9"/><path d="M279.2 122.4 L283.8 115.4" stroke="#0b3346" stroke-width="2.4" stroke-linecap="round"/><path d="M279.4 122 L283.8 115.6" stroke="#1f8cc0" stroke-width="0.9" stroke-linecap="round"/><path d="M285 109.6 L293.6 109.6 Q295.2 109.6 294.2 111 L291.8 114.4 Q291 115.4 289.8 115.6 L286.4 116.4 L285.2 117.4 L281.2 117.4 Q280 117.2 280.6 116 L283.4 110.8 Q284 109.6 285 109.6Z" fill="url(#cg)" stroke="#0b3346" stroke-width="0.9"/></svg>
<div class="t" style="left:89.40px;top:134.90px;font-size:8px;color:#4b7c8c;transform:scaleX(0.9);font-weight:bold;width:400px;text-align:center;transform-origin:50% 50%;">COM test</div>
<div class="b" style="left:317.5px;top:90.7px;width:76px;height:53.6px;background:#f0f0f0;border:0.8px solid #fdfdfd;box-shadow:0 0 0 0.5px #c8d4e6;"></div>
<div class="b" style="left:162px;top:160.6px;width:401.2px;height:24.2px;background:#b4c9ea;"></div>
<div class="t" style="left:163.4px;top:168.40px;font-size:8px;color:#000;transform:scaleX(0.815);">Type of Measurement stand associated to the workstation</div>
<div class="b" style="left:335.2px;top:162.4px;width:227px;height:20.4px;background:#0e95ff;border:1px solid #f0e3cd;"></div>
<div class="t" style="left:336.6px;top:167.90px;font-size:9.6px;color:#fff;transform:scaleX(0.902);font-weight:bold;">ZOLLER</div>
<div class="b" style="left:551px;top:163px;width:10.8px;height:19.4px;background:linear-gradient(180deg,#e6f2fb 0%,#cde6f7 48%,#93cbeb 52%,#80c0e4 100%);border:0.9px solid #5c8db2;border-radius:1.4px;box-shadow:inset 0 0 0 0.6px rgba(255,255,255,0.6);"></div>
<svg style="left:554.2px;top:171.4px" width="4.4" height="2.8" viewBox="0 0 4.4 2.8"><path d="M0 0 L4.4 0 L2.2 2.8Z" fill="#111"/></svg>
<div class="b" style="left:162px;top:189px;width:122.6px;height:41px;background:#b4c9ea;"></div>
<div class="t" style="left:163.2px;top:189.20px;font-size:7.6px;color:#000;transform:scaleX(0.957);font-weight:bold;">Output file format:</div>
<div class="b" style="left:163.5px;top:200.3px;width:7.2px;height:7.2px;background:radial-gradient(circle at 38% 32%,#fff 0%,#e8ecf0 60%,#c8ccd0 100%);border:0.8px solid #8e959c;border-radius:50%;"></div>
<div class="b" style="left:165.29999999999998px;top:202.1px;width:3.6px;height:3.6px;background:radial-gradient(circle at 40% 35%,#58b0ff,#0a44a8);border-radius:50%;"></div>
<div class="b" style="left:163.5px;top:209.70000000000002px;width:7.2px;height:7.2px;background:radial-gradient(circle at 38% 32%,#fff 0%,#dcdcdc 55%,#bdbdbd 100%);border:0.8px solid #8e959c;border-radius:50%;"></div>
<div class="b" style="left:163.5px;top:218.70000000000002px;width:7.2px;height:7.2px;background:radial-gradient(circle at 38% 32%,#fff 0%,#dcdcdc 55%,#bdbdbd 100%);border:0.8px solid #8e959c;border-radius:50%;"></div>
<div class="t" style="left:175px;top:199.20px;font-size:8px;color:#000;transform:scaleX(0.791);">INP File</div>
<div class="t" style="left:175px;top:208.50px;font-size:8px;color:#000;transform:scaleX(0.748);">XML File</div>
<div class="t" style="left:175px;top:217.60px;font-size:8px;color:#000;transform:scaleX(0.827);">XML File advanced</div>
<div class="b" style="left:288.2px;top:189px;width:60px;height:41px;background:#55788c;"></div>
<div class="t" style="left:289.8px;top:189.20px;font-size:7.6px;color:#fff;transform:scaleX(0.9);font-weight:bold;">Rules for sending</div>
<div class="b" style="left:290.09999999999997px;top:200.3px;width:7.2px;height:7.2px;background:radial-gradient(circle at 38% 32%,#fff 0%,#e8ecf0 60%,#c8ccd0 100%);border:0.8px solid #eef1f4;border-radius:50%;box-shadow:0 0 0 0.5px #3c4a55;"></div>
<div class="b" style="left:291.9px;top:202.1px;width:3.6px;height:3.6px;background:radial-gradient(circle at 40% 35%,#58b0ff,#0a44a8);border-radius:50%;"></div>
<div class="b" style="left:290.09999999999997px;top:209.8px;width:7.2px;height:7.2px;background:radial-gradient(circle at 38% 32%,#fff 0%,#dcdcdc 55%,#bdbdbd 100%);border:0.8px solid #eef1f4;border-radius:50%;"></div>
<div class="b" style="left:290.09999999999997px;top:218.8px;width:7.2px;height:7.2px;background:radial-gradient(circle at 38% 32%,#fff 0%,#dcdcdc 55%,#bdbdbd 100%);border:0.8px solid #eef1f4;border-radius:50%;"></div>
<div class="t" style="left:301.4px;top:199.20px;font-size:8px;color:#fff;transform:scaleX(0.83);">only the tool</div>
<div class="t" style="left:301.4px;top:208.50px;font-size:8px;color:#fff;transform:scaleX(0.83);">Unmeasured</div>
<div class="t" style="left:301.4px;top:217.60px;font-size:8px;color:#fff;transform:scaleX(0.83);">Unmeasured</div>
<div class="b" style="left:162px;top:234.2px;width:398.4px;height:14.4px;background:#b4c9ea;"></div>
<div class="t" style="left:163.4px;top:236.60px;font-size:8px;color:#000;transform:scaleX(0.815);">Separator of index tool (ex: "/. ")</div>
<div class="b" style="left:290px;top:235.4px;width:269.6px;height:12.2px;background:#f3ead6;border:1px solid #cbdbf1;"></div>
<div class="t" style="left:292.6px;top:236.80px;font-size:8px;color:#000;transform:scaleX(0.85);">0</div>
<div class="b" style="left:162px;top:253.6px;width:228.2px;height:13.6px;background:#55788c;"></div>
<div class="b" style="left:163.4px;top:255.6px;width:8px;height:8px;background:linear-gradient(135deg,#e8e8e8,#fdfdfd);border:0.7px solid #9aa0a8;"></div>
<div class="t" style="left:175px;top:255.60px;font-size:8px;color:#fff;transform:scaleX(0.817);">Not to inform the code adapter by tool (file *.INP only)</div>
<div class="b" style="left:162px;top:272.3px;width:374.4px;height:14.4px;background:#b4c9ea;"></div>
<div class="t" style="left:163.4px;top:274.60px;font-size:8px;color:#000;transform:scaleX(0.816);">Zoller ext folder</div>
<div class="b" style="left:233.6px;top:273.4px;width:302px;height:12.4px;background:#f3ead6;border:1px solid #cbdbf1;"></div>
<div class="t" style="left:236.2px;top:274.80px;font-size:8px;color:#000;transform:scaleX(0.85);">0</div>
<div class="b" style="left:539px;top:272.4px;width:20.6px;height:14.2px;background:linear-gradient(180deg,#f4f4f4 0%,#ebebeb 48%,#dcdcdc 52%,#d0d0d0 100%);border:0.8px solid #8c8f94;border-radius:2px;box-shadow:inset 0 0 0 0.6px #fafafa;"></div>
<div class="t" style="left:349.30px;top:275.40px;font-size:7px;color:#333;transform:scaleX(0.9);width:400px;text-align:center;transform-origin:50% 50%;">...</div>
<div class="b" style="left:334px;top:184px;width:229.4px;height:48px;background:#fff;border:1px solid #3a3a3a;border-radius:0 0 1px 1px;box-shadow:1px 1px 1.5px rgba(0,0,0,0.5);"></div>
<div class="b" style="left:554.8px;top:185px;width:7.6px;height:46px;background:#efe7d3;"></div>
<div class="b" style="left:481.6px;top:185px;width:73.2px;height:46px;background:#1094ff;"></div>
<svg style="left:365px;top:199.6px" width="13.8" height="10.2" viewBox="0 0 13.8 10.2"><rect width="13.8" height="10.2" fill="#2b2b2b"/><rect x="0.8" y="1" width="12.2" height="4.6" fill="#e8e8e8"/><path d="M2 1 L2 5.6 M3.6 1 L3.6 5.6 M5.2 1 L5.2 5.6 M6.8 1 L6.8 5.6 M8.4 1 L8.4 5.6 M10 1 L10 5.6 M11.6 1 L11.6 5.6" stroke="#333" stroke-width="0.9"/><rect x="0" y="6.6" width="13.8" height="1.6" fill="#c8d21e"/></svg>
<div class="t" style="left:172.00px;top:220.20px;font-size:8px;color:#000;transform:scaleX(0.835);width:400px;text-align:center;transform-origin:50% 50%;">ZOLLER</div>
<svg style="left:434.6px;top:198.8px" width="21" height="11.4" viewBox="0 0 21 11.4"><ellipse cx="10.5" cy="5.7" rx="9.6" ry="4.9" fill="#fff" stroke="#e3192c" stroke-width="1.1"/><text x="10.5" y="7.6" font-size="5.4" font-weight="bold" font-style="italic" text-anchor="middle" fill="#111" font-family="Liberation Sans, sans-serif">Mahr</text></svg>
<div class="t" style="left:244.60px;top:220.40px;font-size:8px;color:#000;transform:scaleX(0.835);width:400px;text-align:center;transform-origin:50% 50%;">NCSToBancMahr</div>
<svg style="left:508.2px;top:194.8px" width="19.8" height="19.8" viewBox="0 0 20 20"><rect width="20" height="20" fill="#fff"/><path d="M5.6 4.8 L9.6 4.8 L8.4 10.6 L11.6 4.8 L14.2 4.8 L13.2 10.6 L16.2 5 L19.6 4 L13.6 15.6 L10 15.6 L10.8 10.8 L7.8 15.6 L3.8 15.6 Z" fill="#17a02a"/><path d="M13.2 10.6 L16.2 5 L19.6 4 L13.6 15.6 L12.2 15.6Z" fill="#0c7a1c"/><path d="M3 6 L6.4 6 M2.6 8.4 L5.8 8.4 M2.2 10.8 L5.2 10.8 M1.8 13.2 L4.6 13.2" stroke="#0c6a1a" stroke-width="1.1"/></svg>
<div class="t" style="left:318.10px;top:220.60px;font-size:8px;color:#fff;transform:scaleX(0.829);width:400px;text-align:center;transform-origin:50% 50%;">NCSToBancWinpreset</div>
</body></html>
